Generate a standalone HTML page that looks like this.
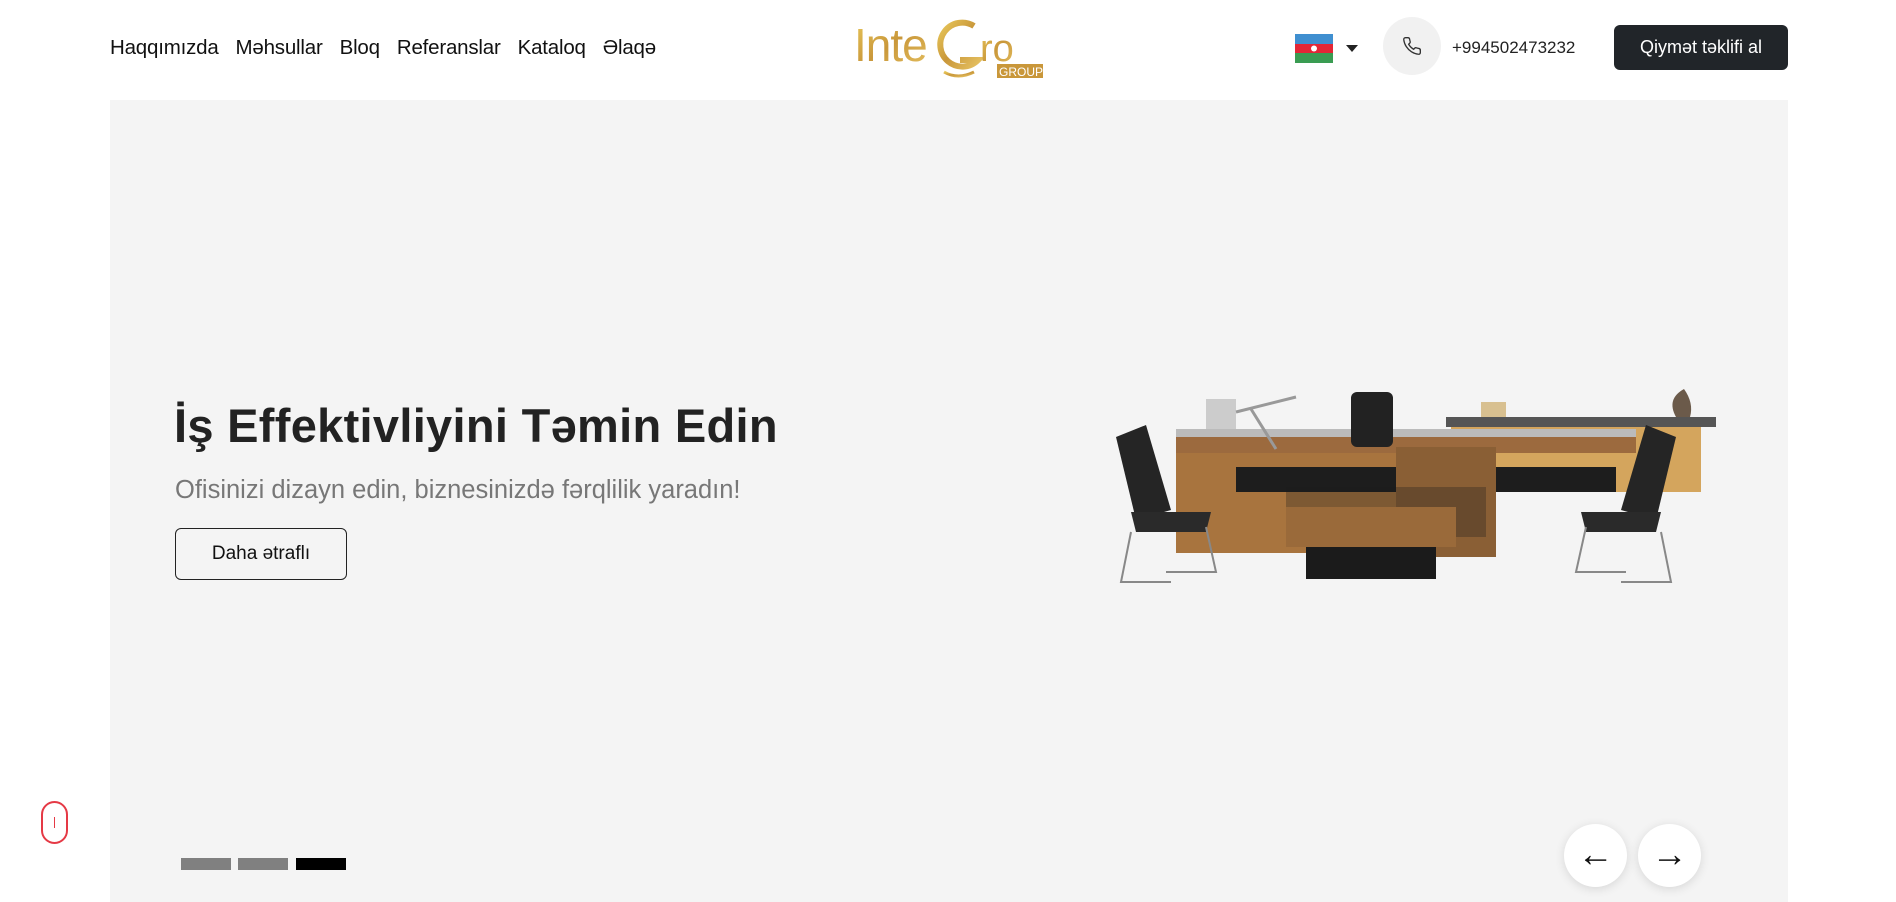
<!DOCTYPE html>
<html><head><meta charset="utf-8"><style>
*{margin:0;padding:0;box-sizing:border-box}
body{width:1896px;height:902px;overflow:hidden;background:#fff;font-family:"Liberation Sans","DejaVu Sans",sans-serif;color:#111;position:relative}
.nav{position:absolute;left:110px;top:36px;font-size:20.5px;display:flex;gap:17px;color:#111;letter-spacing:-0.2px}
.hero{position:absolute;left:110px;top:100px;width:1678px;height:802px;background:#f4f4f4}
.abs{position:absolute}
</style></head><body>
<div class="nav"><span>Haqqımızda</span><span>Məhsullar</span><span>Bloq</span><span>Referanslar</span><span>Kataloq</span><span>Əlaqə</span></div>

<svg class="abs" style="left:852px;top:14px" width="196" height="66" viewBox="0 0 196 66">
<defs><linearGradient id="g" x1="0" x2="1" y1="0" y2="1"><stop offset="0" stop-color="#e8c75a"/><stop offset=".5" stop-color="#c9973a"/><stop offset="1" stop-color="#e5c060"/></linearGradient></defs>
<text x="2" y="47" font-family="Liberation Sans" font-size="46" fill="url(#g)" letter-spacing="-1">Inte</text>
<path d="M122 12 A22 22 0 1 0 126 46 L108 46" fill="none" stroke="url(#g)" stroke-width="6"/>
<path d="M92 58 q14 8 30 0" fill="none" stroke="url(#g)" stroke-width="3"/>
<text x="128" y="47" font-family="Liberation Sans" font-size="38" fill="url(#g)">ro</text>
<rect x="145" y="50" width="46" height="14" fill="#c9973a"/>
<text x="147" y="62" font-family="Liberation Sans" font-size="12" fill="#fff">GROUP</text>
</svg>

<svg class="abs" style="left:1295px;top:34px" width="38" height="29"><rect width="38" height="10" fill="#3f8fd0"/><rect y="10" width="38" height="10" fill="#e32636"/><rect y="19" width="38" height="10" fill="#3a9c52"/><circle cx="19" cy="14.5" r="3" fill="#fff"/></svg>
<div class="abs" style="left:1346px;top:45px;width:0;height:0;border-left:6px solid transparent;border-right:6px solid transparent;border-top:7px solid #222"></div>
<div class="abs" style="left:1383px;top:17px;width:58px;height:58px;border-radius:50%;background:#f1f1f1"></div>
<svg class="abs" style="left:1402px;top:36px" width="20" height="20" viewBox="0 0 24 24"><path d="M22 16.9v3a2 2 0 0 1-2.2 2 19.8 19.8 0 0 1-8.6-3.1 19.5 19.5 0 0 1-6-6A19.8 19.8 0 0 1 2.1 4.2 2 2 0 0 1 4.1 2h3a2 2 0 0 1 2 1.7c.1.9.4 1.9.7 2.8a2 2 0 0 1-.5 2.1L8 9.9a16 16 0 0 0 6 6l1.3-1.3a2 2 0 0 1 2.1-.4c.9.3 1.9.6 2.8.7a2 2 0 0 1 1.7 2z" fill="none" stroke="#333" stroke-width="1.6"/></svg>
<div class="abs" style="left:1452px;top:38px;font-size:17px;color:#222">+994502473232</div>
<div class="abs" style="left:1614px;top:25px;width:174px;height:45px;background:#212529;border-radius:6px;color:#fff;font-size:18px;line-height:45px;text-align:center">Qiymət təklifi al</div>

<div class="hero"></div>
<div class="abs" style="left:174px;top:398px;font-size:47px;font-weight:bold;color:#222;letter-spacing:0.3px">İş Effektivliyini Təmin Edin</div>
<div class="abs" style="left:175px;top:476px;font-size:25.5px;color:#777">Ofisinizi dizayn edin, biznesinizdə fərqlilik yaradın!</div>
<div class="abs" style="left:175px;top:528px;width:172px;height:52px;border:1px solid #222;border-radius:6px;font-size:19px;line-height:50px;text-align:center;color:#111">Daha ətraflı</div>

<svg class="abs" style="left:1106px;top:387px" width="620" height="200" viewBox="0 0 620 200">
<rect x="340" y="30" width="270" height="10" fill="#555"/>
<rect x="345" y="40" width="250" height="65" fill="#d4a55d"/>
<rect x="375" y="15" width="25" height="15" fill="#d8c090"/>
<path d="M570 30 q-10-18 8-28 q10 14 6 28z" fill="#6b5a4a"/>
<rect x="70" y="48" width="460" height="18" fill="#9c6a3e"/>
<rect x="70" y="42" width="460" height="8" fill="#bbb"/>
<rect x="70" y="66" width="300" height="100" fill="#a8743e"/>
<rect x="130" y="80" width="380" height="25" fill="#1d1d1d"/>
<rect x="290" y="60" width="100" height="110" fill="#8a5f35"/>
<rect x="180" y="100" width="200" height="50" fill="#1a1a1a" opacity=".3"/>
<rect x="180" y="120" width="170" height="40" fill="#9a6a3a"/>
<rect x="200" y="160" width="130" height="32" fill="#1b1b1b"/>
<rect x="245" y="5" width="42" height="55" rx="6" fill="#222"/>
<rect x="100" y="12" width="30" height="30" fill="#ccc"/>
<path d="M130 25 l60-15 M145 22 l25 40" stroke="#999" stroke-width="3"/>
<path d="M10 50 l30-12 l25 85 l-35 10z" fill="#252525"/>
<path d="M25 125 h80 l-5 20 h-70z" fill="#2a2a2a"/>
<path d="M25 145 l-10 50 h50 M100 140 l10 45 h-50" stroke="#888" stroke-width="2" fill="none"/>
<path d="M570 50 l-30-12 l-25 85 l35 10z" fill="#252525"/>
<path d="M555 125 h-80 l5 20 h70z" fill="#2a2a2a"/>
<path d="M555 145 l10 50 h-50 M480 140 l-10 45 h50" stroke="#888" stroke-width="2" fill="none"/>
</svg>

<div class="abs" style="left:181px;top:858px;width:50px;height:12px;background:#808080"></div>
<div class="abs" style="left:238px;top:858px;width:50px;height:12px;background:#808080"></div>
<div class="abs" style="left:296px;top:858px;width:50px;height:12px;background:#000"></div>

<div class="abs" style="left:1564px;top:824px;width:63px;height:63px;border-radius:50%;background:#fff;box-shadow:0 2px 10px rgba(0,0,0,.12);font-size:36px;line-height:60px;text-align:center">&#8592;</div>
<div class="abs" style="left:1638px;top:824px;width:63px;height:63px;border-radius:50%;background:#fff;box-shadow:0 2px 10px rgba(0,0,0,.12);font-size:36px;line-height:60px;text-align:center">&#8594;</div>

<div class="abs" style="left:41px;top:801px;width:27px;height:43px;border:2px solid #e53945;border-radius:14px"></div>
<div class="abs" style="left:54px;top:817px;width:1px;height:11px;background:#e53945"></div>
</body></html>
